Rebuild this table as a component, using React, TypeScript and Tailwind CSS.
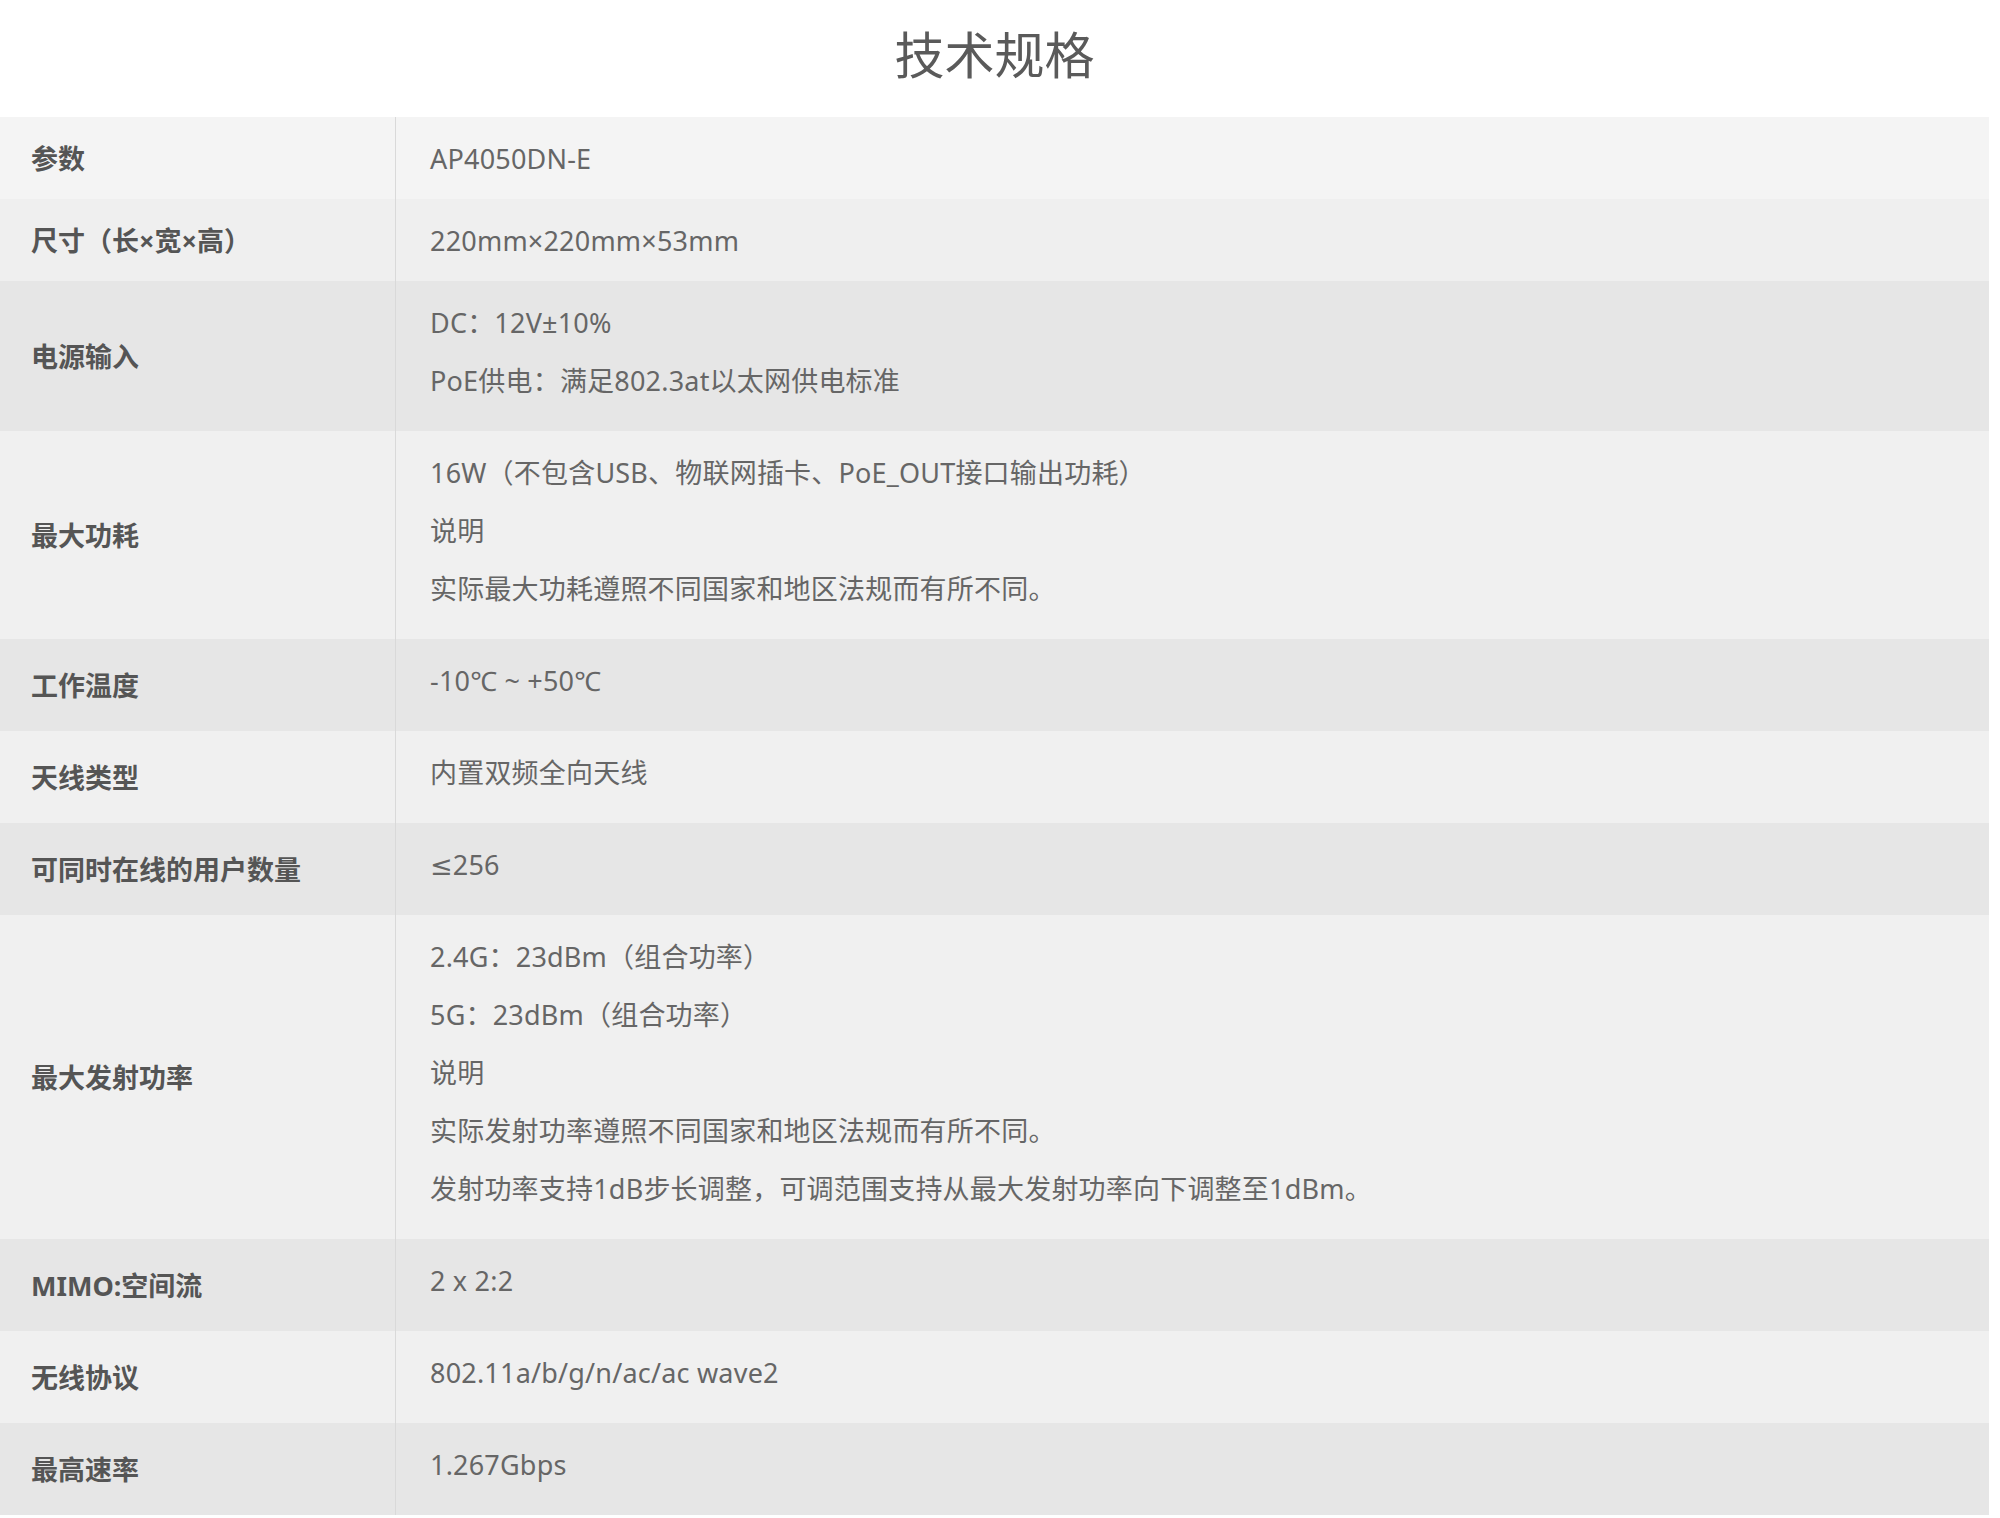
import React from "react";

type Row = { label: string; lines: string[]; bg: string; compact?: boolean };

const rows: Row[] = [
  { label: "参数", lines: ["AP4050DN-E"], bg: "bg-[#f4f4f4]", compact: true },
  { label: "尺寸（长×宽×高）", lines: ["220mm×220mm×53mm"], bg: "bg-[#efefef]", compact: true },
  { label: "电源输入", lines: ["DC：12V±10%", "PoE供电：满足802.3at以太网供电标准"], bg: "bg-[#e6e6e6]" },
  {
    label: "最大功耗",
    lines: ["16W（不包含USB、物联网插卡、PoE_OUT接口输出功耗）", "说明", "实际最大功耗遵照不同国家和地区法规而有所不同。"],
    bg: "bg-[#f0f0f0]",
  },
  { label: "工作温度", lines: ["-10℃ ~ +50℃"], bg: "bg-[#e6e6e6]" },
  { label: "天线类型", lines: ["内置双频全向天线"], bg: "bg-[#f0f0f0]" },
  { label: "可同时在线的用户数量", lines: ["≤256"], bg: "bg-[#e6e6e6]" },
  {
    label: "最大发射功率",
    lines: [
      "2.4G：23dBm（组合功率）",
      "5G：23dBm（组合功率）",
      "说明",
      "实际发射功率遵照不同国家和地区法规而有所不同。",
      "发射功率支持1dB步长调整，可调范围支持从最大发射功率向下调整至1dBm。",
    ],
    bg: "bg-[#f0f0f0]",
  },
  { label: "MIMO:空间流", lines: ["2 x 2:2"], bg: "bg-[#e6e6e6]" },
  { label: "无线协议", lines: ["802.11a/b/g/n/ac/ac wave2"], bg: "bg-[#f0f0f0]" },
  { label: "最高速率", lines: ["1.267Gbps"], bg: "bg-[#e6e6e6]" },
];

export default function App() {
  return (
    <div
      className="w-[2000px] min-h-[1518px] bg-white"
      style={{ fontFamily: '"Noto Sans", "DejaVu Sans", "Noto Sans CJK SC", sans-serif' }}
    >
      <div className="w-[1989px] h-[117px] pt-[30px] text-center text-[50px] leading-[50px] text-[#5a5a5a]">
        技术规格
      </div>
      <div className="w-[1989px] flex flex-col">
        {rows.map((r, i) => (
          <div key={i} className={`flex ${r.bg}`}>
            <div
              className="w-[396px] shrink-0 border-r border-[#d9d9d9] flex items-center pl-[31px] pt-[3px] text-[27px] font-bold text-[#555555]"
            >
              {r.label}
            </div>
            <div
              className={`flex-1 pl-[34px] pt-[13px] ${
                r.compact ? "pb-[11px]" : "pb-[21px]"
              } text-[27px] leading-[58px] tracking-[0.2px] text-[#666666]`}
            >
              {r.lines.map((l, j) => (
                <div key={j}>{l}</div>
              ))}
            </div>
          </div>
        ))}
      </div>
    </div>
  );
}
